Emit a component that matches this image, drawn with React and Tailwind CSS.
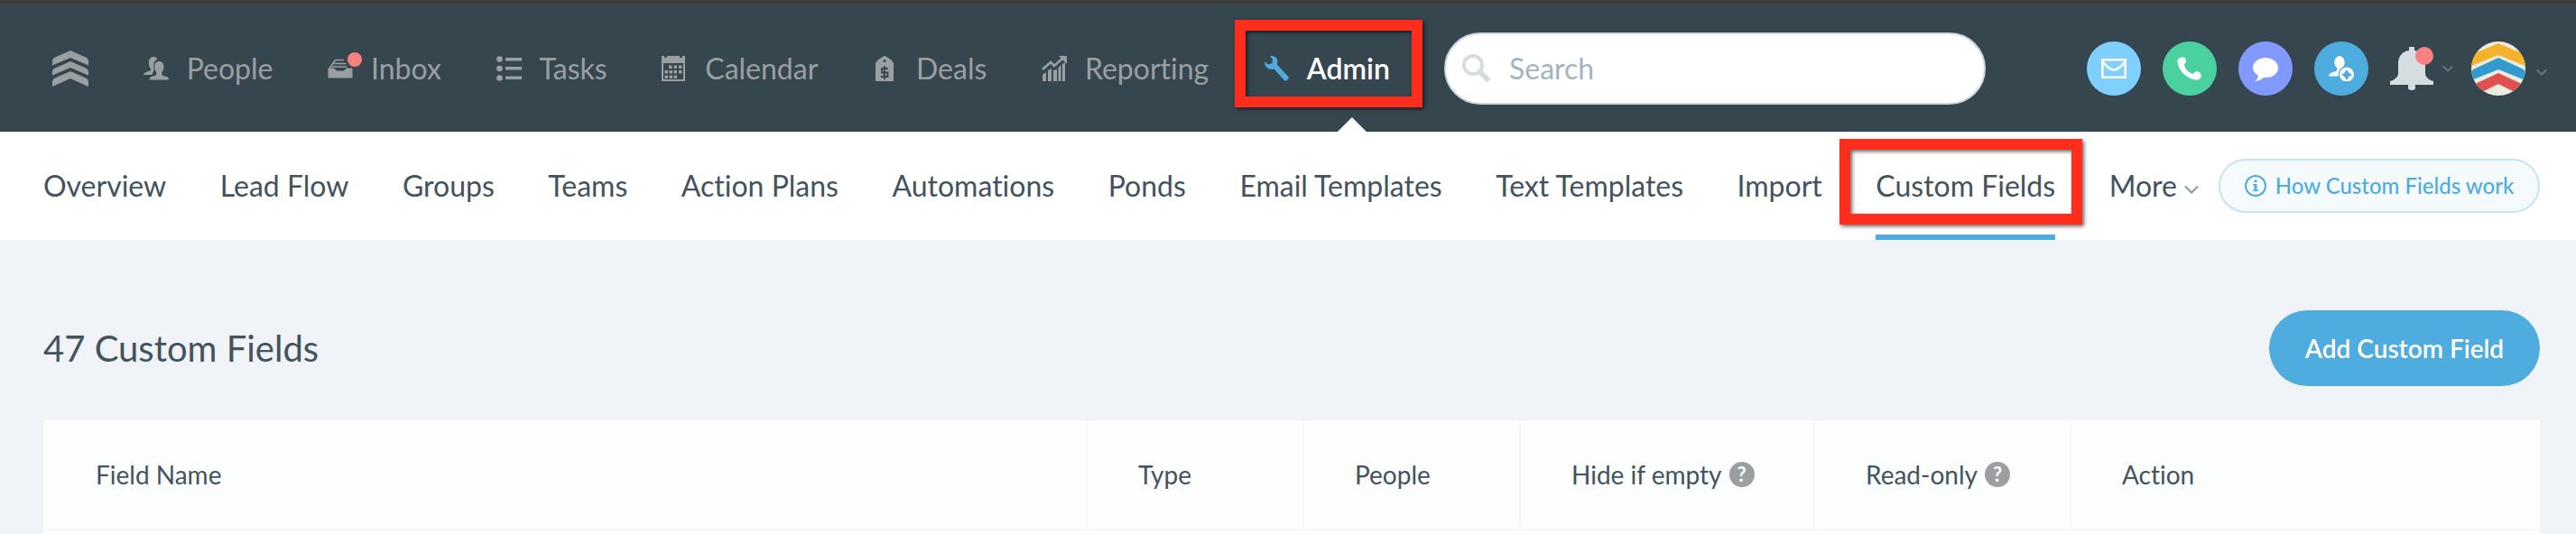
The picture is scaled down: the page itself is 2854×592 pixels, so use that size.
import { useState } from "react";

const mainNav = [
  { key: "people", label: "People", icon: PeopleIcon },
  { key: "inbox", label: "Inbox", icon: InboxIcon },
  { key: "tasks", label: "Tasks", icon: TasksIcon },
  { key: "calendar", label: "Calendar", icon: CalendarIcon },
  { key: "deals", label: "Deals", icon: DealsIcon },
  { key: "reporting", label: "Reporting", icon: ReportingIcon },
  { key: "admin", label: "Admin", icon: WrenchIcon },
];

const subNav = [
  "Overview",
  "Lead Flow",
  "Groups",
  "Teams",
  "Action Plans",
  "Automations",
  "Ponds",
  "Email Templates",
  "Text Templates",
  "Import",
  "Custom Fields",
];

const columns = [
  { label: "Field Name", width: "w-[1156px]" },
  { label: "Type", width: "w-[240px]" },
  { label: "People", width: "w-[240px]" },
  { label: "Hide if empty", width: "w-[326px]", help: true },
  { label: "Read-only", width: "w-[284px]", help: true },
  { label: "Action", width: "w-[520px]" },
];

const quickActions = [
  { label: "Email", color: "bg-[#80d0ff]", icon: MailIcon },
  { label: "Call", color: "bg-[#4bd1a0]", icon: PhoneIcon },
  { label: "Text", color: "bg-[#829aff]", icon: ChatIcon },
  { label: "Add person", color: "bg-[#4eacde]", icon: AddPersonIcon },
];

function Icon({ children, className = "size-7" }) {
  return (
    <svg viewBox="0 0 28 28" fill="currentColor" className={`shrink-0 ${className}`} aria-hidden="true">
      {children}
    </svg>
  );
}

function PeopleIcon() {
  return (
    <Icon>
      <path d="M11 1c2.500 0 4 1 4.500 3-3 .8-4.500 3-4.500 7 0 1.500.3 2.600.8 3.700L11 17.500 9 21H0c.3-2.500 2.500-3 5-3.800 2-.7 3.300-1.200 3-3C6.500 12.500 5.800 10.500 5.800 7.500 5.800 3.500 7.800 1 11 1z" />
      <path d="M17.300 6c3.200 0 5.200 2.300 5.200 6 0 2.800-.8 4.500-2.200 6v2c0 1.200 1 1.800 2.700 2.300 2.800.8 5 1.400 5 4.200H6.500c0-2.800 2.200-3.400 5-4.200 1.700-.5 2.800-1.100 2.800-2.300v-2c-1.400-1.500-2.200-3.200-2.200-6 0-3.700 2-6 5.200-6z" />
    </Icon>
  );
}

function InboxIcon() {
  return (
    <Icon>
      <path d="M8.500 4.500H18M6.500 8.500h14M4.500 12h17" stroke="currentColor" strokeWidth="1.600" fill="none" />
      <path d="M8.500 4.500 1.200 15" stroke="currentColor" strokeWidth="1.600" fill="none" />
      <path d="M1.500 13.500h5.500l3 3h8l3-3h5.500q1 .2 1 1.500v8.500q0 1-1 1h-25q-1 0-1-1V15q0-1.300 1-1.500z" />
    </Icon>
  );
}

function TasksIcon() {
  return (
    <Icon>
      <circle cx="3.500" cy="3.500" r="3.300" />
      <circle cx="3.500" cy="14" r="3.300" />
      <circle cx="3.500" cy="24.500" r="3.300" />
      <path d="M10 2h18v3.500H10zM10 12h18v3.500H10zM10 22.500h18V26H10z" />
    </Icon>
  );
}

function CalendarIcon() {
  return (
    <Icon>
      <path fillRule="evenodd" d="M0 0h3v2h3V0h14v2h3V0h3v28H0zM2 8v18h22V8z" />
      <path d="M8 10.500h3.500V14H8zM13.500 10.500H17V14h-3.500zM19 10.500h3.500V14H19zM3.500 16H7v3.500H3.500zM8.500 16H12v3.500H8.500zM13.500 16H17v3.500h-3.500zM19 16h3.500v3.500H19zM3.500 21.500H7V25H3.500zM8.500 21.500H12V25H8.500zM13.500 21.500H17V25h-3.500z" />
    </Icon>
  );
}

function DealsIcon() {
  return (
    <Icon>
      <path fillRule="evenodd" d="M12.500 0h1L20 4l3 4v20H3V8l3-4zM13 4a1.500 1.500 0 1 1 0 3 1.500 1.500 0 0 1 0-3z" />
      <path d="M17 14H10v4.500h6.500V23H9M13 11v15" stroke="#36464f" strokeWidth="1.800" fill="none" />
    </Icon>
  );
}

function ReportingIcon() {
  return (
    <Icon>
      <path d="M1 15 10 7l4 4L24 2" stroke="currentColor" strokeWidth="2.600" fill="none" />
      <path d="M19 0h9v9zM1 21l4-3v10H1zM7 16l4-2v14H7zM13 16l4-1v13h-4zM18.500 13l3-3v18h-3zM23 9l3-2v21h-3z" />
    </Icon>
  );
}

function WrenchIcon() {
  return (
    <Icon className="size-7 text-[#4eacde]">
      <path d="M7 0c4-.5 7 1 8 4 .6 2 .3 4-.3 5.500L27 22.500c1.200 1.500.8 2.500-.3 3.700-1.200 1.400-2.700 2-3.900.7L11.500 14.500C6 16 1 13 1 6l4 3.500 4.500-1.500L10 4z" />
    </Icon>
  );
}

function MailIcon() {
  return (
    <svg viewBox="0 0 28 22" className="h-[22px] w-7" fill="none" stroke="white" strokeWidth="2.600" aria-hidden="true">
      <path d="M1.300 1.300h25.400v19.400H1.300zM2 4c5 6 8 8.500 12 8.500S21 10 26 4" />
    </svg>
  );
}

function PhoneIcon() {
  return (
    <Icon className="size-7 text-white">
      <path d="M5 1.500c1.500-.5 3.500.5 4.500 2 1 2 .8 4-1.500 5.500 0 5 5 10 10 11 1.500-2.800 4-3.300 6.500-2 2.500 1.300 3 4 1.500 6.500-1 1.700-3 2.300-6 2C10 25 1 15 .5 6.500.3 3.500 2.500 2 5 1.500z" />
    </Icon>
  );
}

function ChatIcon() {
  return (
    <Icon className="size-7 text-white">
      <path d="M14 2c8 0 14 5 14 11s-5 11-13 11c-1 0-2 0-3-.3C10 26 6.500 27.500 2.500 28c2-1.500 3.300-3.700 3.200-6.500C2 19.500 0 16.500 0 13 0 7 6 2 14 2z" />
    </Icon>
  );
}

function AddPersonIcon() {
  return (
    <Icon className="size-7 text-white">
      <ellipse cx="12" cy="7" rx="5.700" ry="7" />
      <path d="M9.500 12h5l-3 4.500-1 6H0c.5-3 3-3.800 6.500-5 2-.6 3-1.500 3-3z" />
      <path
        fillRule="evenodd"
        d="M20 12.500a8 8 0 1 1 0 16 8 8 0 0 1 0-16zm-1.300 3.500v1.500a4 4 0 0 0-2.400 2.400H14.500v1.800h1.800a4 4 0 0 0 2.400 2.400V26h2.600v-1.900a4 4 0 0 0 2.400-2.400h1.800v-1.800h-1.800a4 4 0 0 0-2.400-2.400V16z"
      />
    </Icon>
  );
}

function Chevron({ className }) {
  return (
    <svg viewBox="0 0 16 10" className={`shrink-0 ${className}`} fill="none" stroke="currentColor" strokeWidth="2" aria-hidden="true">
      <path d="M1 1.500 8 8.500 15 1.500" />
    </svg>
  );
}

function Logo() {
  return (
    <svg viewBox="0 0 40 40" className="size-10" fill="#9a9fa2" aria-hidden="true">
      <path d="M20 0 37 7.500Q40 9 40 12v4.500L20 8 0 16.500V12Q0 9 3 7.500z" />
      <path d="M20 12 37 19.500Q40 21 40 24v3.500L20 19 0 27.500V24Q0 21 3 19.500z" />
      <path d="M20 23 37 30.500Q40 32 40 35v5L20 31 0 40v-5Q0 32 3 30.500z" />
    </svg>
  );
}

function Avatar() {
  return (
    <svg viewBox="0 0 60 60" className="size-[60px] rounded-full" aria-hidden="true">
      <rect width="60" height="60" fill="#ecece0" />
      <path d="M30 2 56 13q4 2 4 6v8L30 15 0 27v-8q0-4 4-6z" fill="#f5b22b" />
      <path d="M30 18 56 30q4 2 4 5v8L30 31 0 43v-8q0-3 4-5z" fill="#329acc" />
      <path d="M30 35 60 49v13L30 47 0 62V49z" fill="#e05050" />
    </svg>
  );
}

function HelpIcon() {
  return (
    <span className="flex size-7 items-center justify-center rounded-full bg-[#9c9fa0] text-[22px] leading-7 font-bold text-white">
      ?
    </span>
  );
}

function Highlight({ className }) {
  return (
    <span
      className={`pointer-events-none absolute z-10 border-12 border-[#ff2d1c] drop-shadow-[2px_2px_2px_rgba(0,0,0,0.6)] ${className}`}
    />
  );
}

function Header() {
  const [query, setQuery] = useState("");

  return (
    <header className="flex h-[140px] items-center bg-[#36464f] pr-8 pl-[58px]">
      <nav className="flex h-full flex-1 items-center justify-between text-[32px] leading-10 text-[#9a9fa2]">
        <a href="#home" aria-label="Home">
          <Logo />
        </a>
        {mainNav.map((item) => {
          const NavIcon = item.icon;
          const active = item.key === "admin";
          return (
            <a
              key={item.key}
              href={`#${item.key}`}
              className={`relative flex h-full items-center gap-5 ${active ? "font-semibold text-white" : ""}`}
            >
              <NavIcon />
              {item.key === "inbox" && (
                <span className="absolute top-13 left-[22px] size-4 rounded-full bg-[#f98080]" />
              )}
              <span className="relative flex h-full items-center">
                {item.label}
                {active && (
                  <span className="absolute bottom-0 left-1/2 h-4 w-8 -translate-x-3 bg-white [clip-path:polygon(50%_0,100%_100%,0_100%)]" />
                )}
              </span>
              {active && <Highlight className="top-4 -right-9 bottom-[27px] -left-8" />}
            </a>
          );
        })}
      </nav>

      <label className="mr-28 ml-15 flex h-20 w-[600px] items-center gap-5 rounded-full border-2 border-[#ccd6dd] bg-white pr-5 pl-[18px] text-[#d5dde1]">
        <svg viewBox="0 0 32 32" className="size-8 shrink-0" fill="none" stroke="currentColor" aria-hidden="true">
          <circle cx="12" cy="12" r="10" strokeWidth="4" />
          <path d="m20 20 9.500 9.500" strokeWidth="6" />
        </svg>
        <input
          type="text"
          aria-label="Search"
          value={query}
          onChange={(e) => setQuery(e.target.value)}
          placeholder="Search"
          className="w-full text-[32px] leading-10 text-[#36464f] outline-none placeholder:text-[#9fb5c6]"
        />
      </label>

      <div className="flex items-center gap-6">
        {quickActions.map((action) => {
          const ActionIcon = action.icon;
          return (
            <button
              key={action.label}
              aria-label={action.label}
              className={`flex size-[60px] items-center justify-center rounded-full ${action.color}`}
            >
              <ActionIcon />
            </button>
          );
        })}
        <button aria-label="Notifications" className="relative flex items-center gap-[10px] text-[#6f7d86]">
          <svg viewBox="0 0 48 48" className="size-12" fill="#d6dde1" aria-hidden="true">
            <path d="M21 0h6v4c8 1 12 7 12 14v11c0 5 5 8 9 9v4H28v3c0 2-1 3-4 3s-4-1-4-3v-3H0v-4c4-1 9-4 9-9V18c0-7 4-13 12-14z" />
          </svg>
          <span className="absolute top-0 left-7 size-5 rounded-full bg-[#f98080]" />
          <Chevron className="h-2 w-3" />
        </button>
        <button aria-label="Account" className="-ml-1 flex items-center gap-3 text-[#6f7d86]">
          <Avatar />
          <Chevron className="mt-2 h-2 w-3" />
        </button>
      </div>
    </header>
  );
}

function SubHeader() {
  return (
    <div className="flex h-[120px] items-center bg-white pr-10 pl-12">
      <nav className="flex h-full flex-1 items-center justify-between text-[32px] leading-10 text-[#43535d]">
        {subNav.map((label) => {
          const active = label === "Custom Fields";
          return (
            <a key={label} href="#admin" className="relative flex h-full items-center whitespace-nowrap">
              {label}
              {active && (
                <>
                  <Highlight className="top-2 -right-[30px] bottom-[17px] -left-10" />
                  <span className="absolute inset-x-0 bottom-0 h-[6px] bg-[#4eacde]" />
                </>
              )}
            </a>
          );
        })}
        <button className="flex items-center gap-2">
          More
          <Chevron className="mt-2 h-[10px] w-4 text-[#8b969c]" />
        </button>
      </nav>
      <button className="ml-[22px] flex h-[60px] w-[356px] items-center justify-center gap-[10px] rounded-full border-2 border-[#c5e3f4] bg-[#f5fafd] text-[24px] leading-8 font-medium whitespace-nowrap text-[#4eacde]">
        <svg viewBox="0 0 24 24" className="size-6 shrink-0" fill="currentColor" aria-hidden="true">
          <circle cx="12" cy="12" r="11" fill="none" stroke="currentColor" strokeWidth="2" />
          <path d="M10.500 5.500h3v2.500h-3zM9 10h4.500v6.500H15V18H9v-1.500h1.500v-5H9z" />
        </svg>
        How Custom Fields work
      </button>
    </div>
  );
}

export default function App() {
  return (
    <div className="min-h-screen overflow-hidden bg-[#f0f3f8] font-[Lato,sans-serif] text-[#43535d] [font-variant-ligatures:none]">
      <div className="h-[6px] border-b-2 border-[#464646] bg-[#3c3c3c]" />
      <Header />
      <SubHeader />
      <main className="pr-10 pl-12">
        <div className="flex h-[200px] items-center justify-between pt-10">
          <h1 className="text-[40px] leading-12">47 Custom Fields</h1>
          <button className="h-[84px] w-[300px] rounded-full bg-[#4eacde] text-[28px] leading-9 font-semibold text-white">
            Add Custom Field
          </button>
        </div>
        <table className="w-full table-fixed border-collapse bg-[#fcfdfd] text-left text-[28px] leading-9">
          <thead>
            <tr className="h-[121px] border-b-2 border-[#f6f8f9]">
              {columns.map((col) => (
                <th
                  key={col.label}
                  className={`border-r-2 border-[#f6f8f9] pl-14 font-normal first:pl-[58px] last:border-r-0 ${col.width}`}
                >
                  <span className="flex items-center gap-2 whitespace-nowrap">
                    {col.label}
                    {col.help && <HelpIcon />}
                  </span>
                </th>
              ))}
            </tr>
          </thead>
          <tbody>
            <tr className="h-[5px]">
              <td colSpan={6} />
            </tr>
          </tbody>
        </table>
      </main>
    </div>
  );
}
